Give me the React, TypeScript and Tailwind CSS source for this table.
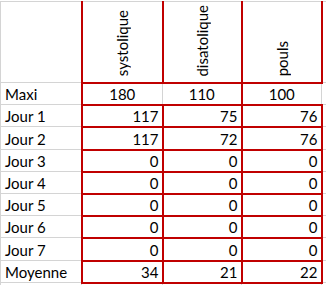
const headers = ["systolique", "disatolique", "pouls"];

const days = [
  { label: "Jour 1", vals: [117, 75, 76], h: "h-[22px]" },
  { label: "Jour 2", vals: [117, 72, 76], h: "h-[23px]" },
  { label: "Jour 3", vals: [0, 0, 0], h: "h-[22px]" },
  { label: "Jour 4", vals: [0, 0, 0], h: "h-[22px]" },
  { label: "Jour 5", vals: [0, 0, 0], h: "h-[22px]" },
  { label: "Jour 6", vals: [0, 0, 0], h: "h-[22px]" },
  { label: "Jour 7", vals: [0, 0, 0], h: "h-[23px]" },
  { label: "Moyenne", vals: [34, 21, 22], h: "h-[22px]" },
];

const grid = "border border-[#d4d4d4] p-0";
const label = "border border-[#d4d4d4] p-0 pl-[4px] text-left align-bottom";
const value = "border-2 border-[#c00000] p-0 pr-[3px] text-right align-bottom";

export default function App() {
  return (
    <div className="h-[285px] w-[326px] overflow-hidden bg-white pt-[1px] font-['Lato',sans-serif] text-[15px] leading-[20px] text-black">
      <table className="w-[341px] table-fixed border-collapse">
        <colgroup>
          <col className="w-[81px]" />
          <col className="w-[81px]" />
          <col className="w-[79px]" />
          <col className="w-[80px]" />
          <col className="w-[20px]" />
        </colgroup>
        <tbody>
          <tr className="h-[81px]">
            <td className={grid} />
            {headers.map((h) => (
              <td
                key={h}
                className="border-x-2 border-t border-b-2 border-x-[#c00000] border-t-[#d4d4d4] border-b-[#c00000] p-0 pb-[1px] text-center align-bottom"
              >
                <span className="inline-block rotate-180 [writing-mode:vertical-rl]">{h}</span>
              </td>
            ))}
            <td className={grid} />
          </tr>
          <tr className="h-[22px]">
            <td className={label}>Maxi</td>
            <td className="border-y-2 border-l-2 border-r border-y-[#c00000] border-l-[#c00000] border-r-[#d4d4d4] p-0 text-center align-bottom">180</td>
            <td className="border-y-2 border-r-2 border-l border-y-[#c00000] border-r-[#c00000] border-l-[#d4d4d4] p-0 text-center align-bottom">110</td>
            <td className="border-y-2 border-r border-y-[#c00000] border-r-[#d4d4d4] p-0 text-center align-bottom">100</td>
            <td className={grid} />
          </tr>
          {days.map((d) => (
            <tr key={d.label} className={d.h}>
              <td className={label}>{d.label}</td>
              {d.vals.map((v, i) => (
                <td key={i} className={value}>
                  {v}
                </td>
              ))}
              <td className={grid} />
            </tr>
          ))}
          <tr className="h-[22px]">
            <td className={grid} />
            <td className={grid} />
            <td className={grid} />
            <td className={grid} />
            <td className={grid} />
          </tr>
        </tbody>
      </table>
    </div>
  );
}
